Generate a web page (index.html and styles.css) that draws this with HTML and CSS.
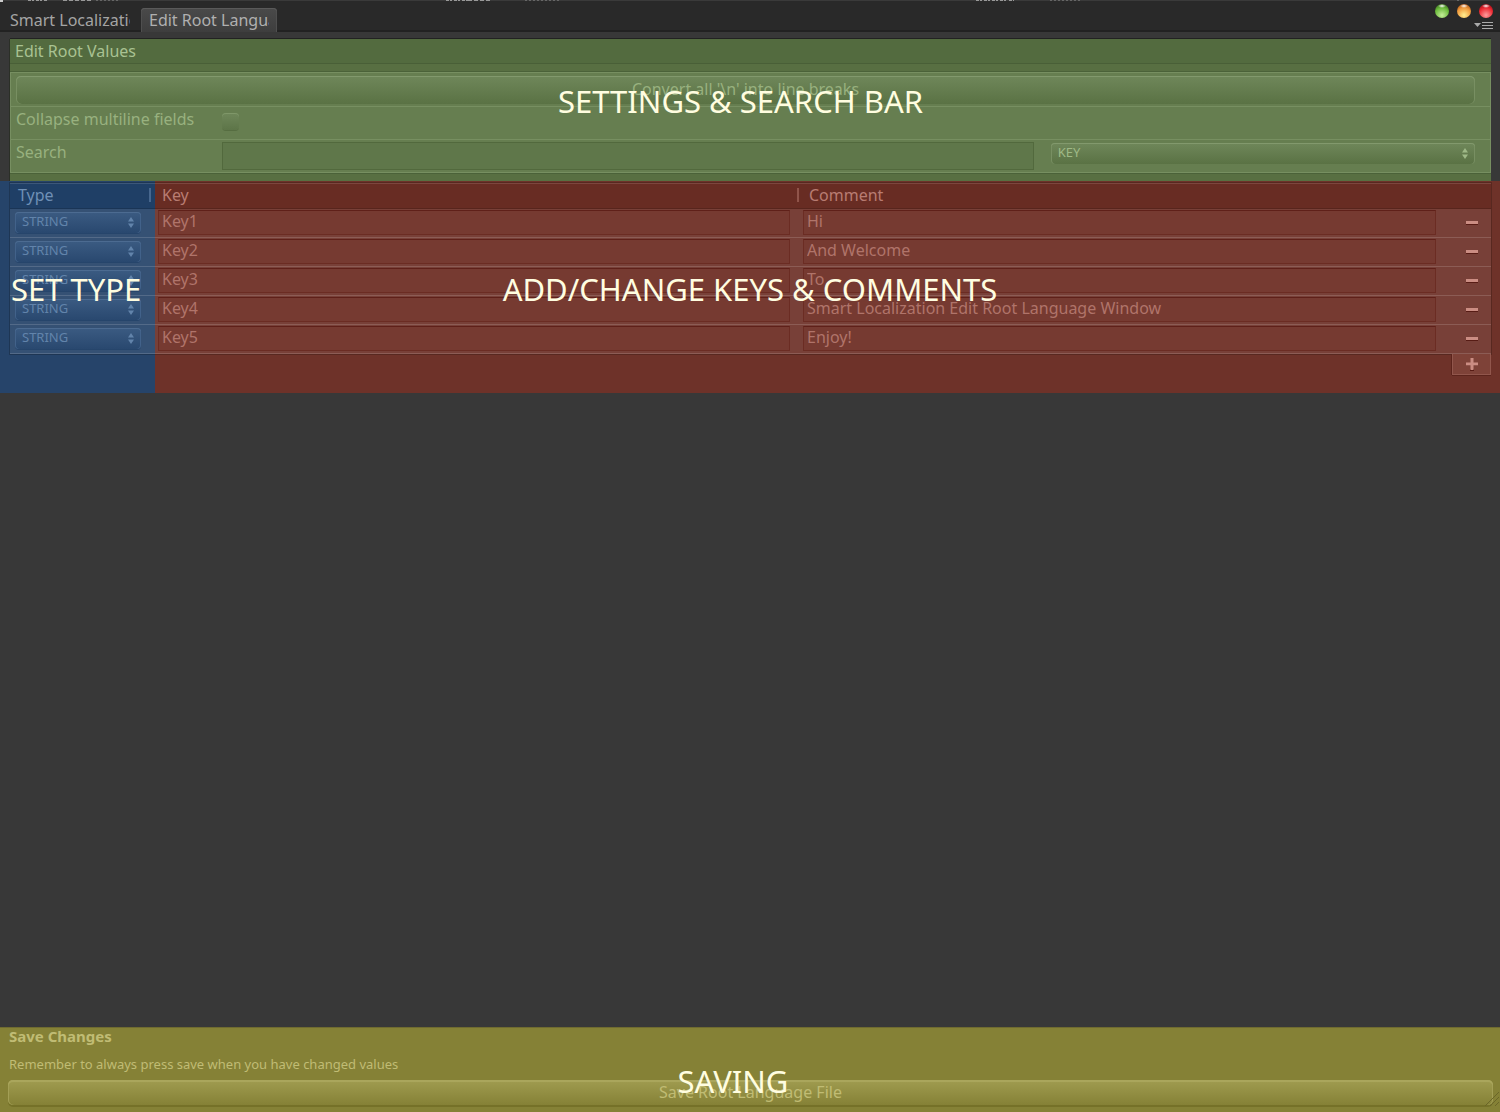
FILE: index.html
```
<!DOCTYPE html>
<html lang="en">
<head>
<meta charset="utf-8">
<title>Edit Root Language</title>
<link rel="stylesheet" href="styles.css">
</head>
<body>
<svg class="behind" width="1500" height="2" aria-hidden="true">
  <rect width="1500" height="1" fill="#3a3a3a"/><rect width="3" height="2" fill="#ccc"/>
  <g stroke="#999" stroke-width="1" fill="none"><path stroke-dasharray="3 1 2 2" d="M28 .5H47M446 .5H468M1009 .5H1014M976 .5H1006"/><path stroke-dasharray="4 2" d="M63 .5H92M468 .5H492"/><path stroke="#666" stroke-dasharray="2 2" d="M96 .5H119M525 .5H560M1050 .5H1080M1457 .5H1461"/></g>
</svg>
<header class="tabbar">
  <nav class="tabs">
    <button class="tab" type="button"><span>Smart Localization</span></button>
    <button class="tab active" type="button"><span>Edit Root Language</span></button>
  </nav>
  <div class="window-tools">
    <div class="lights">
      <button class="light green" type="button" aria-label="Zoom"></button>
      <button class="light orange" type="button" aria-label="Minimize"></button>
      <button class="light red" type="button" aria-label="Close"></button>
    </div>
    <button class="menu" type="button" aria-label="Window menu"><svg width="19" height="8"><path d="M0 1h7L3.500 5z" fill="#aaa"/><path d="M8 .5h11M8 3.500h11M8 6.500h11" stroke="#aaa"/></svg></button>
  </div>
</header>
<main>
  <section class="settings">
    <h1 class="title">Edit Root Values</h1>
    <div class="box">
      <div class="row"><button class="wide" type="button">Convert all '\n' into line breaks</button></div>
      <div class="row"><label for="collapse">Collapse multiline fields</label><input class="check" id="collapse" type="checkbox"></div>
      <div class="row"><label for="search">Search</label><input class="field search" id="search" type="text">
        <div class="select filter"><select aria-label="Search in"><option>KEY</option></select><svg width="6" height="11"><path d="M0 4.500L3 0l3 4.500zM0 6.500L3 11l3-4.500z"/></svg></div></div>
    </div>
    <strong class="note settings-note">SETTINGS &amp; SEARCH BAR</strong>
  </section>
  <section class="keys">
    <table>
      <thead><tr><th class="type"><div>Type</div></th><th><div>Key</div></th><th class="comment"><div>Comment</div></th><th class="action"></th></tr></thead>
      <tbody>
        <tr><td><div class="select"><select aria-label="Type of Key1"><option>STRING</option></select><svg width="6" height="11"><path d="M0 4.500L3 0l3 4.500zM0 6.500L3 11l3-4.500z"/></svg></div></td><td class="key"><input class="field" aria-label="Key 1" value="Key1"></td><td class="comment"><input class="field" aria-label="Comment 1" value="Hi"></td><td><button class="icon" type="button" aria-label="Remove Key1"><svg width="12" height="5"><path class="shade" d="M0 3h12v2H0z"/><path d="M0 1h12v3H0z"/></svg></button></td></tr>
        <tr><td><div class="select"><select aria-label="Type of Key2"><option>STRING</option></select><svg width="6" height="11"><path d="M0 4.500L3 0l3 4.500zM0 6.500L3 11l3-4.500z"/></svg></div></td><td class="key"><input class="field" aria-label="Key 2" value="Key2"></td><td class="comment"><input class="field" aria-label="Comment 2" value="And Welcome"></td><td><button class="icon" type="button" aria-label="Remove Key2"><svg width="12" height="5"><path class="shade" d="M0 3h12v2H0z"/><path d="M0 1h12v3H0z"/></svg></button></td></tr>
        <tr><td><div class="select"><select aria-label="Type of Key3"><option>STRING</option></select><svg width="6" height="11"><path d="M0 4.500L3 0l3 4.500zM0 6.500L3 11l3-4.500z"/></svg></div></td><td class="key"><input class="field" aria-label="Key 3" value="Key3"></td><td class="comment"><input class="field" aria-label="Comment 3" value="To"></td><td><button class="icon" type="button" aria-label="Remove Key3"><svg width="12" height="5"><path class="shade" d="M0 3h12v2H0z"/><path d="M0 1h12v3H0z"/></svg></button></td></tr>
        <tr><td><div class="select"><select aria-label="Type of Key4"><option>STRING</option></select><svg width="6" height="11"><path d="M0 4.500L3 0l3 4.500zM0 6.500L3 11l3-4.500z"/></svg></div></td><td class="key"><input class="field" aria-label="Key 4" value="Key4"></td><td class="comment"><input class="field" aria-label="Comment 4" value="Smart Localization Edit Root Language Window"></td><td><button class="icon" type="button" aria-label="Remove Key4"><svg width="12" height="5"><path class="shade" d="M0 3h12v2H0z"/><path d="M0 1h12v3H0z"/></svg></button></td></tr>
        <tr><td><div class="select"><select aria-label="Type of Key5"><option>STRING</option></select><svg width="6" height="11"><path d="M0 4.500L3 0l3 4.500zM0 6.500L3 11l3-4.500z"/></svg></div></td><td class="key"><input class="field" aria-label="Key 5" value="Key5"></td><td class="comment"><input class="field" aria-label="Comment 5" value="Enjoy!"></td><td><button class="icon" type="button" aria-label="Remove Key5"><svg width="12" height="5"><path class="shade" d="M0 3h12v2H0z"/><path d="M0 1h12v3H0z"/></svg></button></td></tr>
      </tbody>
    </table>
    <button class="add" type="button" aria-label="Add key"><svg width="12" height="13"><path class="shade" d="M0 6h12v2H0zM4 11h4v2H4z"/><path d="M4.500 0h3v4.500H12v3H7.500V12h-3V7.500H0v-3h4.500z"/></svg></button>
    <strong class="note type-note">SET TYPE</strong>
    <strong class="note keys-note">ADD/CHANGE KEYS &amp; COMMENTS</strong>
  </section>
</main>
<footer class="saving">
  <h2>Save Changes</h2>
  <p>Remember to always press save when you have changed values</p>
  <button class="wide save" type="button">Save Root Language File</button>
  <svg class="grip" width="14" height="14"><path d="M0 14L14 0M5 14l9-9M10 14l4-4" stroke="#6a6628" fill="none"/></svg>
  <strong class="note saving-note">SAVING</strong>
</footer>
</body>
</html>
```
FILE: styles.css
```
* { box-sizing: border-box; }
body {
  margin: 0;
  min-height: 100vh;
  display: flex;
  flex-direction: column;
  position: relative;
  background: #383838;
  font: 16px/20px "Noto Sans", "Open Sans", sans-serif;
  overflow-x: hidden;
}
button, input, select { font: inherit; color: inherit; margin: 0; padding: 0; border: 0; background: none; appearance: none; }
h1, h2, p { margin: 0; font-weight: 400; }
.behind { position: absolute; top: 0; left: 0; }

.tabbar {
  display: flex;
  justify-content: space-between;
  height: 32px;
  background: #292929;
  border-bottom: 2px solid #222;
}
.tabs { display: flex; align-items: flex-end; gap: 3px; padding-left: 2px; margin-bottom: -2px; }
.tab { width: 136px; height: 24px; padding: 0 8px; color: #a4a4a4; text-align: left; }
.tab span { display: block; overflow: hidden; white-space: nowrap; }
.tab.active { background: linear-gradient(#4a4a4a, #3e3e3e); border-radius: 4px 4px 0 0; box-shadow: inset 0 1px #5a5a5a, inset 1px 0 #4f4f4f, inset -1px 0 #4f4f4f; color: #b0b0b0; }
.window-tools { display: flex; flex-direction: column; align-items: flex-end; gap: 4px; padding: 4px 7px 0 0; }
.lights { display: flex; gap: 8px; }
.light { width: 14px; height: 14px; border-radius: 50%; }
.green { background: radial-gradient(ellipse 4px 2px at 50% 14%, #fff, transparent), radial-gradient(circle at 50% 80%, #c5ee9a, #6cbb3c 55%, #264d10); }
.orange { background: radial-gradient(ellipse 4px 2px at 50% 14%, #fff, transparent), radial-gradient(circle at 50% 80%, #ffef90, #f09a3c 55%, #8a3000); }
.red { background: radial-gradient(ellipse 4px 2px at 50% 14%, #fff, transparent), radial-gradient(circle at 50% 80%, #ff9c9c, #ee2a33 55%, #700008); }
.menu { height: 8px; display: flex; }

main { flex: 1; padding-top: 7px; }
.settings {
  position: relative;
  margin: 0 9px 0 10px;
  height: 142px;
  background: #586f42;
  color: #98b17f;
  box-shadow: 0 -1px #222, -1px 0 #2b2f27;
}
.title { height: 25px; padding: 2px 5px; font-size: 16px; line-height: 20px; color: #a9c292; background: #536b3f; border-bottom: 1px solid #495f37; }
.box { margin-top: 8px; background: #667e50; border: 1px solid #778f61; box-shadow: 0 -1px #4b6239, 0 1px #4b6239; }
.row { display: flex; height: 33px; padding: 3px 15px 3px 5px; align-items: flex-start; }
.row + .row { border-top: 1px solid #778f61; }
.row label { width: 206px; flex: none; line-height: 18px; }
.wide {
  width: 100%;
  height: 28px;
  border-radius: 5px;
  padding-bottom: 3px;
  line-height: 24px;
  background: linear-gradient(#6f875a, #5a7244);
  box-shadow: inset 0 1px #82996d, inset 1px 0 #788f62, inset -1px 0 #788f62;
}
.check { width: 17px; height: 17px; margin-top: 3px; border-radius: 4px; background: linear-gradient(#6f875a, #5d7548); box-shadow: inset 0 1px #7f9769, 0 1px #566d41; }
.field { width: 100%; height: 25px; padding: 0 3px 3px; border: 1px solid #6b2c23; border-top-color: #5f2019; background: #763a31; color: #b0746a; }
.search { flex: 811 1 0; width: 0; height: 28px; margin: -1px 17px 0 0; background: #5f774a; border-color: #52693d; }
.select { position: relative; height: 21px; border-radius: 4px; background: linear-gradient(#3b5b82, #29486f); box-shadow: inset 0 1px #4c6b91, inset 1px 0 #42628a, inset -1px 0 #42628a, 0 1px #26456b; color: #6284ab; }
.select select { display: block; width: 100%; height: 21px; padding: 0 0 2px 7px; font-size: 13px; line-height: 19px; }
.select svg { position: absolute; top: 5px; right: 7px; fill: currentColor; pointer-events: none; }
.filter { flex: 428 1 0; background: linear-gradient(#6f875a, #5a7244); box-shadow: inset 0 1px #82996d, inset -1px 0 #788f62, inset 1px 0 #788f62; color: #9fb987; }

.keys {
  position: relative;
  height: 212px;
  padding: 2px 9px 0 10px;
  background: linear-gradient(to right, #26446a 155px, #6e3229 155px);
  color: #b87a70;
}
table { width: 100%; table-layout: fixed; border-collapse: collapse; box-shadow: 0 0 0 1px rgba(0, 0, 0, .2); }
th, td { padding: 0; text-align: left; font-weight: 400; vertical-align: top; }
thead { background: linear-gradient(to right, #1f3f66 145px, #682c23 145px); color: #b87c72; }
th { height: 25px; border-top: 1px solid rgba(255, 255, 255, .1); border-bottom: 1px solid rgba(0, 0, 0, .15); }
th div { display: flex; align-items: center; justify-content: space-between; padding: 0 0 0 7px; line-height: 22px; }
th.type { width: 145px; color: #6f90b6; }
th.type div { padding: 0 4px 0 8px; }
th.comment div { padding-left: 10px; }
th.action { width: 48px; }
th:not(.comment, .action) div::after { content: ""; width: 2px; height: 14px; background: currentColor; opacity: .5; }
tbody tr { height: 29px; border-top: 1px solid rgba(255, 255, 255, .15); background: rgba(255, 255, 255, .07); }
tbody tr:last-child { border-bottom: 1px solid rgba(255, 255, 255, .15); }
td { height: 29px; }
td:first-child { padding: 3px 14px 0 5px; }
td.key { padding: 1px 9px 0 3px; }
td.comment { padding: 1px 7px 0 4px; }
td:last-child { padding-left: 10px; }
.icon { width: 38px; height: 27px; display: flex; align-items: center; justify-content: center; }
.icon svg, .add svg { fill: #cb8d83; }
.keys .shade { fill: #571c15; }
.add { display: flex; align-items: center; justify-content: center; width: 39px; height: 21px; margin-left: auto; background: #7e4238; border: solid #91564c; border-width: 0 1px 1px; box-shadow: 0 1px #5c241c, -1px 0 #5c241c; }

.saving { position: relative; height: 85px; padding: 0 7px 0 8px; background: #858136; border-top: 1px solid #6f6b30; color: #c0bc74; }
.saving h2 { padding: 0 1px; font-size: 15px; font-weight: 700; line-height: 16px; }
.saving p { padding: 11px 1px 6px; font-size: 13px; line-height: 19px; }
.save { height: 25px; background: linear-gradient(#a09c50, #858136); box-shadow: inset 0 2px #aaa65c, inset 1px 0 #a39f56, inset -1px 0 #a39f56, 0 2px #757128; }
.grip { position: absolute; right: 1px; bottom: 6px; }

.note { position: absolute; color: #fffde0; font-size: 31px; font-weight: 400; line-height: 40px; white-space: nowrap; pointer-events: none; }
.settings-note { left: 0; right: 20px; top: 42px; text-align: center; }
.type-note { left: 11px; top: 88px; }
.keys-note { left: 0; right: 0; top: 88px; text-align: center; }
.saving-note { left: 0; right: 34px; top: 33px; text-align: center; }
```
